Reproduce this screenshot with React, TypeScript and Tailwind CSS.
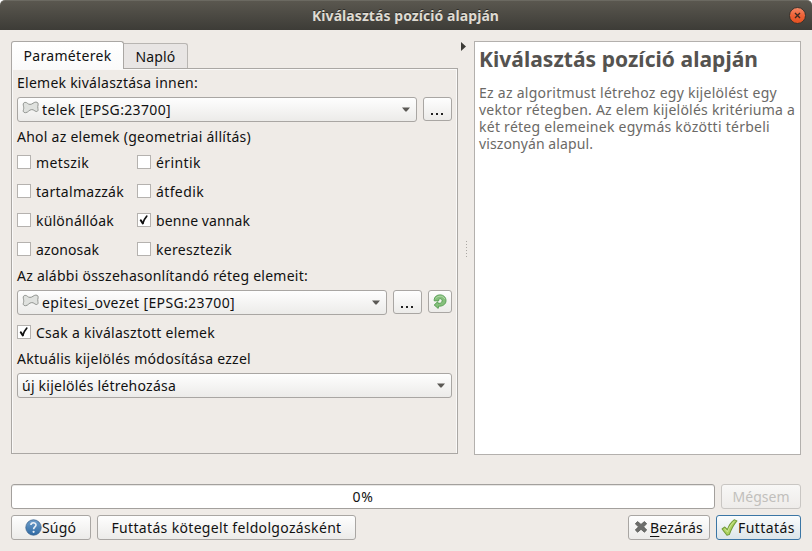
import { useLayoutEffect, useRef, useState, type ReactNode } from "react";
import clsx from "clsx";

/** Single line of text whose tracking is adjusted so that it fills `width` pixels. */
function Fit({ width, className, children }: { width: number; className?: string; children: ReactNode }) {
  const ref = useRef<HTMLSpanElement>(null);
  const [spacing, setSpacing] = useState(0);
  useLayoutEffect(() => {
    const el = ref.current;
    if (!el) return;
    el.style.letterSpacing = "0px";
    const count = (el.textContent ?? "").length;
    setSpacing((width - el.getBoundingClientRect().width) / count);
  }, [width]);
  return (
    <span
      ref={ref}
      className={clsx("inline-block shrink-0 whitespace-pre", className)}
      style={{ letterSpacing: `${spacing}px` }}
    >
      {children}
    </span>
  );
}

function CheckBox({ label, width, checked = false }: { label: string; width: number; checked?: boolean }) {
  return (
    <label className="flex h-[14px] items-center gap-[5px]">
      <span className="flex size-[14px] shrink-0 items-center justify-center border border-[#b5b2af] bg-white">
        {checked && (
          <svg width="12" height="12" viewBox="0 0 12 12" fill="none" stroke="#111" strokeLinecap="round" strokeLinejoin="round">
            <path d="M2.8 6.3 L4.7 9.3" strokeWidth="2.1" />
            <path d="M4.9 9.2 C5.8 6.4 7 4 8.8 2.1" strokeWidth="1.6" />
          </svg>
        )}
      </span>
      <Fit width={width}>{label}</Fit>
    </label>
  );
}

function PolygonIcon() {
  return (
    <svg className="relative -top-[2px] shrink-0" width="17" height="13" viewBox="0 0 17 13">
      <path
        d="M3.2 1.4 C5.2 1.2 5.4 3.3 8 3.4 C10.6 3.4 11.4 1.2 13.8 1.1 C15.7 1.1 16.4 2.2 16.1 3.8 C15.8 5.2 15.6 6 15.9 7.4 C16.4 9.4 15.8 10.6 14.3 10.5 C12.4 10.2 12 8.6 9.8 8.6 C6.8 8.6 6.4 11.6 3.4 11.7 C1.3 11.7 0.9 10.3 1.5 8.5 C2 6.9 1.6 5.6 1.3 4.2 C1 2.5 1.6 1.5 3.2 1.4 Z"
        fill="#dfe1de"
        stroke="#90938f"
        strokeWidth="1"
      />
    </svg>
  );
}

function Arrow() {
  return (
    <svg className="mr-[6px] ml-auto shrink-0" width="8" height="5" viewBox="0 0 8 5">
      <path d="M0 0.4 H8 L4.6 4.6 H3.4 Z" fill="#5b5955" />
    </svg>
  );
}

const control =
  "flex shrink-0 items-center rounded-[3px] border border-[#a9a6a3] bg-linear-to-b from-[#fefefe] to-[#ecebe9]";

function Combo({ text, width, icon, className }: { text: string; width: number; icon?: boolean; className: string }) {
  return (
    <div className={clsx(control, "h-[25px] pl-1", className)}>
      {icon && <span className="mr-[3px] flex w-[17px]"><PolygonIcon /></span>}
      <Fit width={width}>{text}</Fit>
      <Arrow />
    </div>
  );
}

function Dots() {
  return (
    <button className={clsx(control, "h-6 w-[29px] items-end justify-center gap-[3px] pr-px pb-[5px]")} aria-label="...">
      <span className="size-[2px] bg-[#222]" />
      <span className="size-[2px] bg-[#222]" />
      <span className="size-[2px] bg-[#222]" />
    </button>
  );
}

const predicates = [
  { label: "metszik", width: 53 },
  { label: "érintik", width: 45 },
  { label: "tartalmazzák", width: 88 },
  { label: "átfedik", width: 48 },
  { label: "különállóak", width: 78 },
  { label: "benne vannak", width: 94, checked: true },
  { label: "azonosak", width: 63 },
  { label: "keresztezik", width: 76 },
];

function TitleBar() {
  return (
    <header className="flex h-[30px] items-center rounded-t-[5px] border-t border-[#6b6961] bg-linear-to-b from-[#5a574f] to-[#3d3c37] pr-[6px]">
      <div className="-mt-px flex-1 pl-[312px] font-bold text-[#dfdbd2] [text-shadow:0_-1px_0_#2d2c28]">
        <Fit width={187}>Kiválasztás pozíció alapján</Fit>
      </div>
      <svg className="-mt-px" width="17" height="17" viewBox="0 0 17 17">
        <defs>
          <linearGradient id="close" x2="0" y2="1">
            <stop stopColor="#f38a69" />
            <stop offset="0.5" stopColor="#ef6237" />
            <stop offset="1" stopColor="#e3501f" />
          </linearGradient>
        </defs>
        <circle cx="8.5" cy="8.5" r="8" fill="url(#close)" stroke="#35332e" />
        <path d="M6 6 L11 11 M11 6 L6 11" stroke="#3b2a22" strokeWidth="1.4" />
      </svg>
    </header>
  );
}

function Parameters() {
  return (
    <section className="flex w-[447px] flex-col">
      <div className="z-10 -mb-px flex h-7 items-end">
        <div className="flex h-7 w-[113px] justify-center rounded-t-[3px] border border-b-0 border-[#aaa7a4] bg-linear-to-b from-white to-[#fafafa] pt-[5px]">
          <Fit width={88}>Paraméterek</Fit>
        </div>
        <div className="mb-px flex h-[25px] w-16 justify-center rounded-tr-[3px] border border-b-0 border-l-0 border-[#b8b5b2] bg-[#e8e5e4] pt-[4px]">
          <Fit width={40}>Napló</Fit>
        </div>
      </div>
      <div className="flex h-[386px] flex-col border border-[#aaa7a4] pr-[5px] pl-[5px] shadow-[inset_1px_1px_0_#faf9f8,inset_-1px_0_0_#faf9f8]">
        <div className="mt-[5px] h-[17px]"><Fit width={181}>Elemek kiválasztása innen:</Fit></div>
        <div className="mt-[6px] flex gap-[6px]">
          <Combo text="telek [EPSG:23700]" width={129} icon className="w-[400px]" />
          <Dots />
        </div>
        <div className="mt-[6px] h-[17px]"><Fit width={234}>Ahol az elemek (geometriai állítás)</Fit></div>
        <div className="mt-[10px] grid grid-cols-[120px_1fr] gap-y-[15px]">
          {predicates.map((p) => <CheckBox key={p.label} {...p} />)}
        </div>
        <div className="mt-[11px] h-[17px]"><Fit width={291}>Az alábbi összehasonlítandó réteg elemeit:</Fit></div>
        <div className="mt-[6px] flex items-start gap-[6px]">
          <Combo text="epitesi_ovezet [EPSG:23700]" width={193} icon className="w-[370px]" />
          <Dots />
          <button className={clsx(control, "h-[23px] w-6 justify-center")} aria-label="Iteráció">
            <svg width="14" height="15" viewBox="0 0 14 15">
              <path
                d="M1.2 5.6 C1.6 2.4 4 0.9 7 0.9 C10.6 0.9 13 3.3 13 6.6 C13 9.9 10.4 12 6.6 12.2 L5.6 12.2 L5.2 14.4 L1.2 11 L4.6 7.8 L5 9.2 C6.2 9.6 9 9.2 9.2 6.9 C9.2 5.4 8 4.6 6.8 4.8 C5.8 5 5.6 5.8 5.8 6.8 H1.2 Z"
                fill="#85c07c"
                stroke="#4f9a4c"
                strokeWidth="0.9"
                strokeLinejoin="round"
              />
              <path d="M2.6 4.6 C4.6 1.4 9.8 1.2 11.8 5" fill="none" stroke="#b4d9ab" />
            </svg>
          </button>
        </div>
        <div className="mt-[10px]"><CheckBox label="Csak a kiválasztott elemek" width={179} checked /></div>
        <div className="mt-[11px] h-[17px]"><Fit width={234}>Aktuális kijelölés módosítása ezzel</Fit></div>
        <Combo text="új kijelölés létrehozása" width={154} className="mt-[6px] w-[435px]" />
      </div>
    </section>
  );
}

function Splitter() {
  return (
    <div className="flex w-4 flex-col items-center">
      <svg className="mt-px mr-[5px]" width="5" height="9" viewBox="0 0 5 9">
        <path d="M0 0 L5 4.5 L0 9 Z" fill="#3c3b37" />
      </svg>
      <div className="mt-[190px] ml-px flex flex-col gap-[2px]">
        {[0, 1, 2, 3, 4, 5].map((i) => <span key={i} className="size-px bg-[#aaa7a3]" />)}
      </div>
    </div>
  );
}

const helpLines = [
  { text: "Ez az algoritmust létrehoz egy kijelölést egy", width: 298 },
  { text: "vektor rétegben. Az elem kijelölés kritériuma a", width: 316 },
  { text: "két réteg elemeinek egymás közötti térbeli", width: 291 },
  { text: "viszonyán alapul.", width: 114 },
];

function Help() {
  return (
    <aside className="h-[414px] w-[327px] border border-[#b3b0ad] bg-white pl-1 text-[#6b6966]">
      <h1 className="mt-[3px] h-7 text-[21px] leading-7 font-bold text-[#555350]">
        <Fit width={279}>Kiválasztás pozíció alapján</Fit>
      </h1>
      <div className="mt-[11px]">
        {helpLines.map((l) => (
          <p key={l.text} className="h-[17px]"><Fit width={l.width}>{l.text}</Fit></p>
        ))}
      </div>
    </aside>
  );
}

function Footer() {
  return (
    <footer className="mt-[29px] flex flex-col gap-[6px]">
      <div className="flex gap-[6px]">
        <div className="flex h-[25px] w-[704px] items-center justify-center rounded-[3px] border border-[#a3a09d] bg-white shadow-[inset_0_1px_0_#e8e7e5]">
          <Fit width={21}>0%</Fit>
        </div>
        <button className="flex h-[25px] w-20 items-center justify-center rounded-[3px] border border-[#c9c6c3] bg-linear-to-b from-[#f8f7f6] to-[#eeecea] text-[#c1bfbc]">
          <Fit width={57}>Mégsem</Fit>
        </button>
      </div>
      <div className="flex gap-[6px]">
        <button className={clsx(control, "h-[25px] w-20 pl-[13px]")}>
          <svg width="17" height="17" viewBox="0 0 17 17" className="-mt-px shrink-0">
            <defs>
              <linearGradient id="help" x2="0" y2="1">
                <stop stopColor="#6f9fcb" />
                <stop offset="1" stopColor="#2e69a4" />
              </linearGradient>
            </defs>
            <circle cx="8.5" cy="8.5" r="7.7" fill="url(#help)" stroke="#3c6690" strokeWidth="0.8" />
            <path d="M5.9 6.1 C5.9 3 11 3 11 6 C11 7.9 8.6 8 8.6 10.3" fill="none" stroke="#e8eff6" strokeWidth="1.6" />
            <circle cx="8.6" cy="12.8" r="1.1" fill="#e8eff6" />
          </svg>
          <Fit width={34}>Súgó</Fit>
        </button>
        <button className={clsx(control, "h-[25px] w-[259px] justify-center")}>
          <Fit width={230}>Futtatás kötegelt feldolgozásként</Fit>
        </button>
        <button className={clsx(control, "ml-auto h-[25px] w-[82px] pl-[5px]")}>
          <svg width="14" height="14" viewBox="0 0 14 14" className="-mt-px mr-[2px] shrink-0">
            <path
              d="M3.6 1.6 L7 4.4 L10.4 1.6 L12.7 3.8 L9.6 6.8 L12.7 10 L10.4 12.2 L7 9.3 L3.6 12.2 L1.3 10 L4.5 6.8 L1.3 3.8 Z"
              fill="#6c6d6b"
              stroke="#545552"
              strokeWidth="0.8"
              strokeLinejoin="round"
            />
          </svg>
          <Fit width={53}><span className="underline decoration-1 underline-offset-[3px]">B</span>ezárás</Fit>
        </button>
        <button className="flex h-[25px] w-[85px] items-center rounded-[3px] border border-[#3b76a5] bg-linear-to-b from-[#fafcfd] to-[#dce5e9] pl-[4px]">
          <svg width="17" height="17" viewBox="0 0 16 17" className="-mt-px shrink-0" preserveAspectRatio="none">
            <path
              d="M1 10 L3.6 8 L6 10.6 C7.3 6.5 9.5 3.1 12.4 0.8 L15 1.9 C11.9 5.5 9.7 10.1 7.8 15.6 L5.6 16.2 Z"
              fill="#add35f"
              stroke="#729c3a"
              strokeLinejoin="round"
            />
            <path d="M3.2 9.6 L6.1 12.8 C7.5 8.5 9.6 4.8 12.7 2.2" fill="none" stroke="#d4e9a4" strokeWidth="0.8" />
          </svg>
          <Fit width={57}>Futtatás</Fit>
        </button>
      </div>
    </footer>
  );
}

export default function App() {
  return (
    <div className="h-[551px] w-[812px] overflow-hidden bg-white font-['Noto_Sans','Open_Sans',sans-serif] text-[14px] leading-[17px] text-[#111]">
      <TitleBar />
      <main className="h-[521px] bg-[#efebe7] px-[11px] pt-[11px]">
        <div className="flex h-[414px]">
          <Parameters />
          <Splitter />
          <Help />
        </div>
        <Footer />
      </main>
    </div>
  );
}
